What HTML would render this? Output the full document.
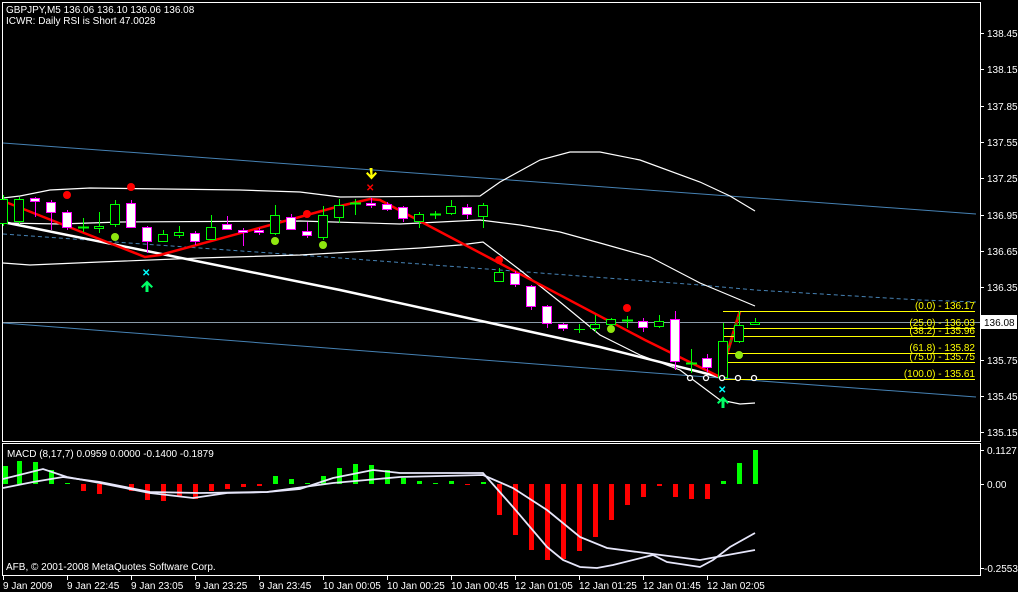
<!DOCTYPE html>
<html><head><meta charset="utf-8"><style>
html,body{margin:0;padding:0;background:#000;}
svg{display:block;}
text{font-family:"Liberation Sans",sans-serif;font-size:10px;fill:#fff;}
.y{fill:#ff0;}
</style></head><body>
<svg width="1018" height="592" viewBox="0 0 1018 592" xmlns="http://www.w3.org/2000/svg">
<rect width="1018" height="592" fill="#000"/>
<!-- frames -->
<g fill="none" stroke="#fff" stroke-width="1" shape-rendering="crispEdges">
<rect x="2.5" y="2.5" width="978" height="439"/>
<rect x="2.5" y="443.5" width="978" height="132"/>
</g>
<!-- header text -->
<text x="6" y="13">GBPJPY,M5  136.06 136.10 136.06 136.08</text>
<text x="6" y="24">ICWR: Daily RSI is Short 47.0028</text>

<!-- blue channel lines -->
<g fill="none" stroke="#4682b4" stroke-width="1">
<polyline points="3,143 976,214"/>
<polyline points="3,323 600,369 976,397"/>
<polyline stroke-dasharray="4,3" points="3,234 340,258 700,285 755,290 920,300 976,302"/>
</g>
<!-- bid line -->
<line x1="3" y1="322.5" x2="980" y2="322.5" stroke="#8a9aa8" stroke-width="1" shape-rendering="crispEdges"/>

<!-- bollinger -->
<g fill="none" stroke="#fff" stroke-width="1.2">
<polyline points="3,198 20,196 50,190 90,188 240,190 300,192 340,197 480,196 500,182 540,160 570,152 600,152 640,160 700,182 730,196 755,211"/>
<polyline points="3,223 60,224 120,222 300,221 400,224 480,220 520,225 560,232 600,243 650,257 700,283 755,306"/>
<polyline points="3,263 30,265 100,262 200,258 300,255 420,248 460,245 483,242 520,270 560,302 600,335 640,355 680,370 700,385 720,400 740,404 755,403"/>
</g>
<!-- thick white trendline -->
<polyline fill="none" stroke="#fff" stroke-width="2.5" points="3,222 340,290 600,347 720,377"/>
<!-- red zigzag -->
<polyline fill="none" stroke="#f00" stroke-width="2.5" points="3,201 145,257 160,255 340,206 370,199 380,200 645,340 720,377"/>
<line x1="720" y1="377" x2="740" y2="311" stroke="#f00" stroke-width="3"/>
<line x1="720" y1="377" x2="740" y2="311" stroke="#0a0" stroke-width="1.5" stroke-dasharray="3,3"/>

<!-- fibo -->
<g stroke="#ff0" stroke-width="1" shape-rendering="crispEdges">
<line x1="723" y1="311.5" x2="975" y2="311.5"/>
<line x1="723" y1="328.5" x2="975" y2="328.5"/>
<line x1="723" y1="336.5" x2="975" y2="336.5"/>
<line x1="723" y1="353.5" x2="975" y2="353.5"/>
<line x1="723" y1="362.5" x2="975" y2="362.5"/>
<line x1="723" y1="379.5" x2="975" y2="379.5"/>
</g>
<g class="y" text-anchor="end">
<text class="y" x="975" y="309">(0.0) - 136.17</text>
<text class="y" x="975" y="326">(25.0) - 136.03</text>
<text class="y" x="975" y="334">(38.2) - 135.96</text>
<text class="y" x="975" y="351">(61.8) - 135.82</text>
<text class="y" x="975" y="360">(75.0) - 135.75</text>
<text class="y" x="975" y="377">(100.0) - 135.61</text>
</g>

<!-- candles -->
<g shape-rendering="crispEdges" stroke-width="1">
<g stroke="#00ff00" fill="#000">
<line x1="3.5" y1="195" x2="3.5" y2="226"/><rect x="-1.5" y="199.5" width="9" height="24"/>
<line x1="19.5" y1="197" x2="19.5" y2="224"/><rect x="14.5" y="199.5" width="9" height="22"/>
<line x1="83.5" y1="218" x2="83.5" y2="232"/><line x1="78" y1="227.5" x2="89" y2="227.5" stroke-width="2"/>
<line x1="99.5" y1="212" x2="99.5" y2="233"/><rect x="94.5" y="226.5" width="9" height="2"/>
<line x1="115.5" y1="200" x2="115.5" y2="227"/><rect x="110.5" y="204.5" width="9" height="20"/>
<line x1="163.5" y1="230" x2="163.5" y2="242"/><rect x="158.5" y="234.5" width="9" height="7"/>
<line x1="179.5" y1="226" x2="179.5" y2="238"/><rect x="174.5" y="232.5" width="9" height="3"/>
<line x1="211.5" y1="215" x2="211.5" y2="240"/><rect x="206.5" y="227.5" width="9" height="12"/>
<line x1="275.5" y1="205" x2="275.5" y2="235"/><rect x="270.5" y="215.5" width="9" height="18"/>
<line x1="323.5" y1="206" x2="323.5" y2="240"/><rect x="318.5" y="215.5" width="9" height="22"/>
<line x1="339.5" y1="199" x2="339.5" y2="223"/><rect x="334.5" y="205.5" width="9" height="12"/>
<line x1="355.5" y1="199" x2="355.5" y2="215"/><line x1="350" y1="203.5" x2="361" y2="203.5" stroke-width="2"/>
<line x1="419.5" y1="212" x2="419.5" y2="228"/><rect x="414.5" y="214.5" width="9" height="7"/>
<line x1="435.5" y1="211" x2="435.5" y2="219"/><line x1="430" y1="214.5" x2="441" y2="214.5" stroke-width="2"/>
<line x1="451.5" y1="200" x2="451.5" y2="215"/><rect x="446.5" y="206.5" width="9" height="7"/>
<line x1="483.5" y1="203" x2="483.5" y2="228"/><rect x="478.5" y="205.5" width="9" height="11"/>
<line x1="499.5" y1="268" x2="499.5" y2="282"/><rect x="494.5" y="272.5" width="9" height="9"/>
<line x1="579.5" y1="324" x2="579.5" y2="333"/><line x1="574" y1="329.5" x2="585" y2="329.5"/>
<line x1="595.5" y1="315" x2="595.5" y2="332"/><rect x="590.5" y="324.5" width="9" height="4"/>
<line x1="611.5" y1="318" x2="611.5" y2="326"/><rect x="606.5" y="319.5" width="9" height="5"/>
<line x1="627.5" y1="316" x2="627.5" y2="328"/><line x1="622" y1="320.5" x2="633" y2="320.5" stroke-width="2"/>
<line x1="659.5" y1="315" x2="659.5" y2="328"/><rect x="654.5" y="321.5" width="9" height="5"/>
<line x1="691.5" y1="349" x2="691.5" y2="373"/><line x1="686" y1="363.5" x2="697" y2="363.5" stroke-width="2"/>
<line x1="723.5" y1="323" x2="723.5" y2="377"/><rect x="718.5" y="341.5" width="9" height="36"/>
<line x1="739.5" y1="311" x2="739.5" y2="343"/><rect x="734.5" y="325.5" width="9" height="16"/>
<line x1="755.5" y1="318" x2="755.5" y2="324"/><rect x="750.5" y="322.5" width="9" height="2"/>
</g>
<g stroke="#ff00ff" fill="#fff">
<line x1="35.5" y1="197" x2="35.5" y2="217"/><rect x="30.5" y="198.5" width="9" height="3"/>
<line x1="51.5" y1="200" x2="51.5" y2="230"/><rect x="46.5" y="202.5" width="9" height="10"/>
<line x1="67.5" y1="210" x2="67.5" y2="230"/><rect x="62.5" y="212.5" width="9" height="15"/>
<line x1="131.5" y1="200" x2="131.5" y2="228"/><rect x="126.5" y="203.5" width="9" height="24"/>
<line x1="147.5" y1="226" x2="147.5" y2="253"/><rect x="142.5" y="227.5" width="9" height="14"/>
<line x1="195.5" y1="231" x2="195.5" y2="245"/><rect x="190.5" y="233.5" width="9" height="8"/>
<line x1="227.5" y1="216" x2="227.5" y2="230"/><rect x="222.5" y="224.5" width="9" height="5"/>
<line x1="243.5" y1="228" x2="243.5" y2="246"/><rect x="238.5" y="230.5" width="9" height="2"/>
<line x1="259.5" y1="228" x2="259.5" y2="235"/><rect x="254.5" y="230.5" width="9" height="2"/>
<line x1="291.5" y1="214" x2="291.5" y2="230"/><rect x="286.5" y="217.5" width="9" height="12"/>
<line x1="307.5" y1="222" x2="307.5" y2="238"/><rect x="302.5" y="231.5" width="9" height="4"/>
<line x1="371.5" y1="198" x2="371.5" y2="208"/><rect x="366.5" y="203.5" width="9" height="2"/>
<line x1="387.5" y1="202" x2="387.5" y2="211"/><rect x="382.5" y="204.5" width="9" height="5"/>
<line x1="403.5" y1="206" x2="403.5" y2="222"/><rect x="398.5" y="207.5" width="9" height="11"/>
<line x1="467.5" y1="204" x2="467.5" y2="219"/><rect x="462.5" y="207.5" width="9" height="7"/>
<line x1="515.5" y1="271" x2="515.5" y2="287"/><rect x="510.5" y="273.5" width="9" height="11"/>
<line x1="531.5" y1="285" x2="531.5" y2="310"/><rect x="526.5" y="286.5" width="9" height="20"/>
<line x1="547.5" y1="305" x2="547.5" y2="328"/><rect x="542.5" y="306.5" width="9" height="17"/>
<line x1="563.5" y1="323" x2="563.5" y2="331"/><rect x="558.5" y="324.5" width="9" height="4"/>
<line x1="643.5" y1="318" x2="643.5" y2="332"/><rect x="638.5" y="321.5" width="9" height="6"/>
<line x1="675.5" y1="311" x2="675.5" y2="370"/><rect x="670.5" y="319.5" width="9" height="42"/>
<line x1="707.5" y1="354" x2="707.5" y2="372"/><rect x="702.5" y="358.5" width="9" height="9"/>
</g>
</g>

<!-- dots -->
<g fill="#f00">
<circle cx="67" cy="195" r="4"/><circle cx="131" cy="187" r="4"/><circle cx="307" cy="214" r="4"/>
<circle cx="499" cy="260" r="4"/><circle cx="627" cy="308" r="4"/>
</g>
<g fill="#8fe60f">
<circle cx="115" cy="237" r="4"/><circle cx="275" cy="241" r="4"/><circle cx="323" cy="245" r="4"/>
<circle cx="611" cy="329" r="4"/><circle cx="739" cy="355" r="4"/>
</g>
<g fill="#000" stroke="#fff" stroke-width="1.3">
<circle cx="690" cy="378" r="2.5"/><circle cx="706" cy="378" r="2.5"/><circle cx="722" cy="378" r="2.5"/>
<circle cx="738" cy="378" r="2.5"/><circle cx="754" cy="378" r="2.5"/>
</g>
<!-- arrows -->
<path d="M369.5,168 h3 v7 l3,-3 l1.5,1.5 l-5.5,6 l-5.5,-6 l1.5,-1.5 l3,3z" fill="#ff0"/>
<text x="366" y="191" style="fill:#f00;font-size:10px;font-weight:bold">✕</text>
<text x="142" y="276" style="fill:#0ff;font-size:10px;font-weight:bold">✕</text>
<path d="M145.5,292 h3 v-7 l3,3 l1.5,-1.5 l-6,-6 l-6,6 l1.5,1.5 l3,-3z" fill="#00ff66"/>
<text x="718" y="393" style="fill:#0ff;font-size:10px;font-weight:bold">✕</text>
<path d="M721.5,408 h3 v-7 l3,3 l1.5,-1.5 l-6,-6 l-6,6 l1.5,1.5 l3,-3z" fill="#00ff66"/>

<!-- price scale -->
<g stroke="#fff" shape-rendering="crispEdges">
<line x1="981" y1="33.5" x2="984" y2="33.5"/><line x1="981" y1="69.5" x2="984" y2="69.5"/>
<line x1="981" y1="106.5" x2="984" y2="106.5"/><line x1="981" y1="142.5" x2="984" y2="142.5"/>
<line x1="981" y1="178.5" x2="984" y2="178.5"/><line x1="981" y1="215.5" x2="984" y2="215.5"/>
<line x1="981" y1="251.5" x2="984" y2="251.5"/><line x1="981" y1="287.5" x2="984" y2="287.5"/>
<line x1="981" y1="360.5" x2="984" y2="360.5"/><line x1="981" y1="396.5" x2="984" y2="396.5"/>
<line x1="981" y1="432.5" x2="984" y2="432.5"/>
<line x1="981" y1="450.5" x2="984" y2="450.5"/><line x1="981" y1="484.5" x2="984" y2="484.5"/>
<line x1="981" y1="568.5" x2="984" y2="568.5"/>
</g>
<g>
<text x="987" y="37">138.45</text><text x="987" y="73">138.15</text><text x="987" y="110">137.85</text>
<text x="987" y="146">137.55</text><text x="987" y="182">137.25</text><text x="987" y="219">136.95</text>
<text x="987" y="255">136.65</text><text x="987" y="291">136.35</text><text x="987" y="364">135.75</text>
<text x="987" y="400">135.45</text><text x="987" y="436">135.15</text>
<text x="987" y="454">0.1127</text><text x="987" y="488">0.00</text><text x="984" y="572">-0.2553</text>
</g>
<rect x="981" y="315" width="36" height="14" fill="#fff"/>
<text x="984" y="326" style="fill:#000">136.08</text>

<!-- MACD histogram -->
<g fill="#00ff00" shape-rendering="crispEdges">
<rect x="3" y="466" width="5" height="18"/><rect x="17" y="461" width="5" height="23"/>
<rect x="33" y="462" width="5" height="22"/><rect x="49" y="470" width="5" height="14"/>
<rect x="65" y="483" width="5" height="1"/>
<rect x="273" y="476" width="5" height="8"/><rect x="289" y="479" width="5" height="5"/>
<rect x="305" y="483" width="5" height="1"/><rect x="321" y="476" width="5" height="8"/>
<rect x="337" y="468" width="5" height="16"/><rect x="353" y="464" width="5" height="20"/>
<rect x="369" y="465" width="5" height="19"/><rect x="385" y="470" width="5" height="14"/>
<rect x="401" y="478" width="5" height="6"/><rect x="417" y="481" width="5" height="3"/>
<rect x="433" y="483" width="5" height="1"/><rect x="449" y="481" width="5" height="3"/>
<rect x="481" y="482" width="5" height="2"/>
<rect x="721" y="481" width="5" height="3"/><rect x="737" y="463" width="5" height="21"/>
<rect x="753" y="450" width="5" height="34"/>
</g>
<g fill="#f00" shape-rendering="crispEdges">
<rect x="81" y="484" width="5" height="7"/><rect x="97" y="484" width="5" height="10"/>
<rect x="129" y="484" width="5" height="7"/><rect x="145" y="484" width="5" height="16"/>
<rect x="161" y="484" width="5" height="17"/><rect x="177" y="484" width="5" height="13"/>
<rect x="193" y="484" width="5" height="15"/><rect x="209" y="484" width="5" height="7"/>
<rect x="225" y="484" width="5" height="5"/><rect x="241" y="484" width="5" height="3"/>
<rect x="257" y="484" width="5" height="2"/><rect x="465" y="484" width="5" height="1"/>
<rect x="497" y="484" width="5" height="31"/><rect x="513" y="484" width="5" height="51"/>
<rect x="529" y="484" width="5" height="66"/><rect x="545" y="484" width="5" height="76"/>
<rect x="561" y="484" width="5" height="75"/><rect x="577" y="484" width="5" height="67"/>
<rect x="593" y="484" width="5" height="53"/><rect x="609" y="484" width="5" height="36"/>
<rect x="625" y="484" width="5" height="21"/><rect x="641" y="484" width="5" height="13"/>
<rect x="657" y="484" width="5" height="2"/><rect x="673" y="484" width="5" height="13"/>
<rect x="689" y="484" width="5" height="15"/><rect x="705" y="484" width="5" height="15"/>
</g>
<!-- MACD lines -->
<g fill="none" stroke="#e6e6fa" stroke-width="1.8">
<polyline points="3,479 43,469 67,477 100,483 150,493 193,498 227,493 267,492 300,489 333,478 373,470 400,473 483,473 513,507 547,547 563,560 580,567 597,568 613,565 653,555 667,562 700,567 713,560 730,547 755,533"/>
<polyline points="3,488 33,482 63,477 100,482 150,492 200,493 267,492 333,483 400,477 483,475 513,488 547,510 580,537 607,548 653,554 700,560 755,550"/>
</g>
<text x="7" y="457">MACD  (8,17,7) 0.0959 0.0000 -0.1400 -0.1879</text>
<text x="6" y="570">AFB, © 2001-2008 MetaQuotes Software Corp.</text>

<!-- time axis -->
<g stroke="#fff" shape-rendering="crispEdges">
<line x1="3.5" y1="576" x2="3.5" y2="580"/><line x1="67.5" y1="576" x2="67.5" y2="580"/>
<line x1="131.5" y1="576" x2="131.5" y2="580"/><line x1="195.5" y1="576" x2="195.5" y2="580"/>
<line x1="259.5" y1="576" x2="259.5" y2="580"/><line x1="323.5" y1="576" x2="323.5" y2="580"/>
<line x1="387.5" y1="576" x2="387.5" y2="580"/><line x1="451.5" y1="576" x2="451.5" y2="580"/>
<line x1="515.5" y1="576" x2="515.5" y2="580"/><line x1="579.5" y1="576" x2="579.5" y2="580"/>
<line x1="643.5" y1="576" x2="643.5" y2="580"/><line x1="707.5" y1="576" x2="707.5" y2="580"/>
</g>
<g>
<text x="3" y="589">9 Jan 2009</text><text x="67" y="589">9 Jan 22:45</text>
<text x="131" y="589">9 Jan 23:05</text><text x="195" y="589">9 Jan 23:25</text>
<text x="259" y="589">9 Jan 23:45</text><text x="323" y="589">10 Jan 00:05</text>
<text x="387" y="589">10 Jan 00:25</text><text x="451" y="589">10 Jan 00:45</text>
<text x="515" y="589">12 Jan 01:05</text><text x="579" y="589">12 Jan 01:25</text>
<text x="643" y="589">12 Jan 01:45</text><text x="707" y="589">12 Jan 02:05</text>
</g>
</svg>
</body></html>
